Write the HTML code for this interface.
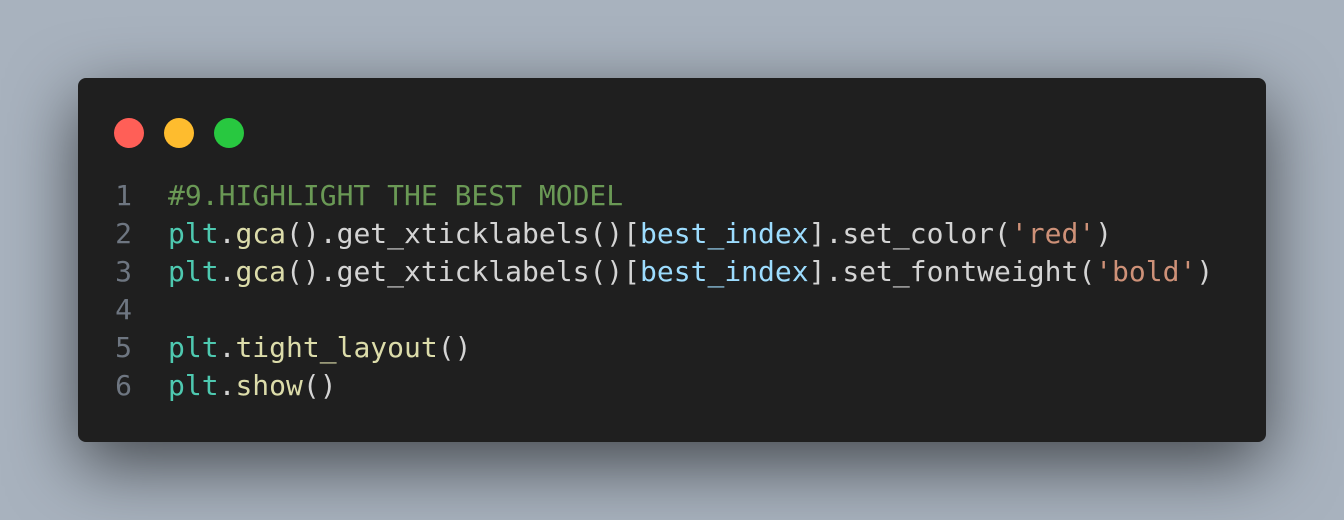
<!DOCTYPE html>
<html><head><style>
html,body{margin:0;padding:0;}
body{width:1344px;height:520px;background:#a8b2be;position:relative;overflow:hidden;}
.win{position:absolute;left:78px;top:78px;width:1188px;height:364px;background:#1f1f1f;border-radius:8px;box-shadow:0 22px 70px rgba(0,0,0,0.6);}
.dot{position:absolute;top:40px;width:30px;height:30px;border-radius:50%;}
.code{position:absolute;left:0;top:99px;font-family:"DejaVu Sans Mono","Liberation Mono",monospace;font-size:28px;line-height:38px;color:#d4d4d4;white-space:pre;}
.ln{display:inline-block;width:54px;text-align:right;color:#6e7681;margin-right:36px;}
.c{color:#6a9955}.p{color:#4ec9b0}.f{color:#dcdcaa}.v{color:#9cdcfe}.s{color:#ce9178}
</style></head><body>
<div class="win">
<div class="dot" style="left:36px;background:#ff5f57"></div>
<div class="dot" style="left:86px;background:#febc2e"></div>
<div class="dot" style="left:136px;background:#28c840"></div>
<div class="code"><div><span class="ln">1</span><span class="c">#9.HIGHLIGHT THE BEST MODEL</span></div><div><span class="ln">2</span><span class="p">plt</span>.<span class="f">gca</span>().get_xticklabels()[<span class="v">best_index</span>].set_color(<span class="s">'red'</span>)</div><div><span class="ln">3</span><span class="p">plt</span>.<span class="f">gca</span>().get_xticklabels()[<span class="v">best_index</span>].set_fontweight(<span class="s">'bold'</span>)</div><div><span class="ln">4</span></div><div><span class="ln">5</span><span class="p">plt</span>.<span class="f">tight_layout</span>()</div><div><span class="ln">6</span><span class="p">plt</span>.<span class="f">show</span>()</div></div>
</div>
</body></html>
